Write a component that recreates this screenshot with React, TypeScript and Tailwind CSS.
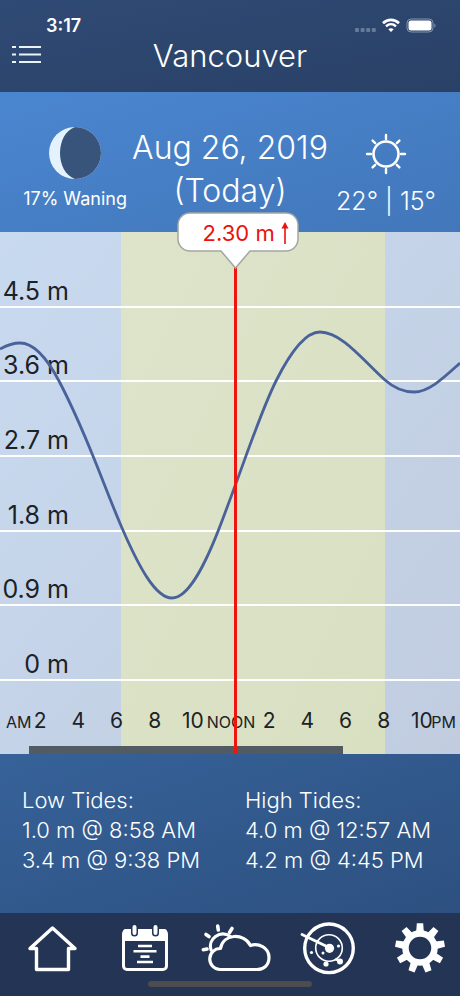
import type { ReactNode } from "react";

const levels = ["4.5 m", "3.6 m", "2.7 m", "1.8 m", "0.9 m", "0 m"];

const hours = ["2", "4", "6", "8", "10", "NOON", "2", "4", "6", "8", "10"];

const tides = [
  { title: "Low Tides:", rows: ["1.0 m @ 8:58 AM", "3.4 m @ 9:38 PM"] },
  { title: "High Tides:", rows: ["4.0 m @ 12:57 AM", "4.2 m @ 4:45 PM"] },
];

// x, y and slope of the water level along the day
const knots = [
  [0, 117, -0.55],
  [20, 111, 0],
  [59, 149, 1.9],
  [93, 224, 2.45],
  [122, 296, 2.3],
  [172, 366, 0],
  [222, 289, -2.65],
  [235, 254, -2.7],
  [276, 149, -2],
  [320, 100, 0],
  [385, 148, 0.9],
  [414, 160, 0],
  [460, 131, -0.9],
];

function curvePath() {
  let d = `M${knots[0][0]} ${knots[0][1]}`;
  for (let i = 1; i < knots.length; i++) {
    const [x0, y0, m0] = knots[i - 1];
    const [x1, y1, m1] = knots[i];
    const h = (x1 - x0) / 3;
    d += ` C${x0 + h} ${y0 + m0 * h} ${x1 - h} ${y1 - m1 * h} ${x1} ${y1}`;
  }
  return d;
}

function StatusBar() {
  return (
    <div className="flex h-4 items-center justify-between pr-6 pl-[46px]">
      <span className="text-lg leading-4 font-semibold">3:17</span>
      <div className="flex items-center gap-1.5">
        <svg width="21" height="16" viewBox="0 0 21 16" fill="#667b9b" aria-hidden="true">
          <rect x="0" y="10" width="4" height="4" rx="1" />
          <rect x="5.6" y="10" width="4" height="4" rx="1" />
          <rect x="11.2" y="10" width="4" height="4" rx="1" />
          <rect x="16.8" y="10" width="4" height="4" rx="1" />
        </svg>
        <svg width="18" height="16" viewBox="0 0 18 16" fill="none" stroke="#fff" aria-hidden="true">
          <path d="M1 5.2C5.6.7 12.4.7 17 5.2" strokeWidth="2.6" />
          <path d="M4 8.4C6.9 5.6 11.1 5.6 14 8.4" strokeWidth="2.4" />
          <path d="M9 14 6.3 11.2C7.9 9.8 10.1 9.8 11.7 11.2Z" fill="#fff" stroke="none" />
        </svg>
        <svg width="30" height="16" viewBox="0 0 30 16" aria-hidden="true">
          <rect x="1" y="1" width="26" height="13" rx="4" fill="none" stroke="#8394ae" />
          <rect x="2.5" y="2.5" width="23" height="10" rx="2.5" fill="#fff" />
          <path d="M28.3 5.3c1.6.8 1.6 3.6 0 4.4z" fill="#8394ae" />
        </svg>
      </div>
    </div>
  );
}

function Header() {
  return (
    <header className="h-[92px] bg-linear-to-br from-[#2f4a74] to-[#2a4167] pt-[18px]">
      <StatusBar />
      <div className="grid grid-cols-[1fr_auto_1fr] items-center px-3 pt-px">
        <button aria-label="Locations" className="-mt-1 justify-self-start">
          <svg width="29" height="20" viewBox="0 0 29 20" stroke="#e8f3fa" strokeWidth="2" aria-hidden="true">
            <path d="M0 3h4M7 3h22M0 10.5h4M7 10.5h22M0 18h4M7 18h22" />
          </svg>
        </button>
        <h1 className="text-[31px] leading-[42px] font-light">Vancouver</h1>
      </div>
    </header>
  );
}

function DayPanel() {
  return (
    <section className="grid h-[140px] grid-cols-[minmax(0,1fr)_auto_minmax(0,1fr)] bg-linear-to-br from-[#4a86d0] to-[#4277ba]">
      <div className="flex flex-col items-center pt-[34px] pl-[18px]">
        <svg width="54" height="54" viewBox="0 0 54 54" aria-hidden="true">
          <circle cx="27" cy="27" r="26" fill="#e3f2fd" />
          <path d="M27 1a26 26 0 0 1 0 52C7 46 7 8 27 1Z" fill="#38547a" />
        </svg>
        <p className="mt-1 text-lg leading-[30px] whitespace-nowrap">17% Waning</p>
      </div>
      <h2 className="pt-[34px] text-center text-[32px] leading-[43px] font-light">
        Aug 26, 2019
        <br />
        (Today)
      </h2>
      <div className="flex flex-col items-center pt-[41px] pr-4">
        <svg width="42" height="42" viewBox="0 0 42 42" fill="none" stroke="#fff" strokeWidth="2.4" strokeLinecap="round" aria-hidden="true">
          <circle cx="21" cy="21" r="12.5" strokeWidth="2.6" />
          <path d="M21 2v4M21 36v4M2 21h4M36 21h4M7.6 7.6l2.600 2.600M31.800 31.800l2.600 2.600M7.6 34.4l2.600-2.600M31.800 10.2l2.600-2.600" />
        </svg>
        <p className="mt-2.5 text-[25px] leading-8 font-light whitespace-nowrap">22° | 15°</p>
      </div>
    </section>
  );
}

function TideChart() {
  return (
    <section
      aria-label="Tide chart"
      className="relative h-[522px] bg-linear-to-br from-[#c8daf0] to-[#c1ccdf] text-[#1c2226]"
    >
      <div className="absolute inset-y-0 right-[16.2%] left-[26.4%] bg-linear-to-br from-[#dee4ca] to-[#d9dfc1]" />
      <div className="relative grid h-[449px] grid-rows-6 pt-px">
        {levels.map((level) => (
          <div key={level} className="flex items-end border-b-2 border-white">
            <span className="w-[69px] text-right text-[25px] leading-[30px] whitespace-nowrap">{level}</span>
          </div>
        ))}
      </div>
      <div className="relative mt-6 grid grid-cols-[minmax(0,1fr)_repeat(11,minmax(0,2fr))_minmax(0,1fr)] items-baseline pl-0.5 leading-8 whitespace-nowrap">
        <span className="pl-1 text-base leading-8">AM</span>
        {hours.map((hour, i) => (
          <span key={i} className="flex justify-center">
            <span className={hour === "NOON" ? "text-base leading-8" : "text-[21px] leading-8"}>{hour}</span>
          </span>
        ))}
        <span className="flex justify-end pr-1 text-base leading-8">PM</span>
      </div>
      <svg
        className="absolute inset-0 h-full w-full"
        viewBox="0 0 460 522"
        preserveAspectRatio="none"
        fill="none"
        aria-hidden="true"
      >
        <path d={curvePath()} stroke="#4a629a" strokeWidth="2.8" vectorEffect="non-scaling-stroke" />
      </svg>
      <div className="absolute right-[25.4%] bottom-0 left-[6.3%] h-2 bg-[#525b61]" />
      <div className="absolute inset-y-0 left-[50.8%] w-[3px] bg-[#f0140f]" />
      <div className="absolute -top-5 left-[50.8%] -ml-[57px] h-14 w-[122px]">
        <svg width="122" height="58" viewBox="0 0 122 58" aria-hidden="true">
          <path
            d="M13 1h96a12 12 0 0 1 12 12v14a12 12 0 0 1-12 12H73L58.5 56 44 39H13A12 12 0 0 1 1 27V13A12 12 0 0 1 13 1Z"
            fill="#fff"
            stroke="#a2a7a0"
            strokeWidth="1.5"
          />
        </svg>
        <div className="absolute inset-x-0 top-[5px] flex h-8 items-center justify-end gap-1.5 pr-2.5 text-[#ea120e]">
          <span className="text-[22px] leading-8 whitespace-nowrap">2.30 m</span>
          <svg width="8" height="24" viewBox="0 0 8 24" aria-hidden="true">
            <path d="M4 23V5" stroke="currentColor" strokeWidth="1.6" />
            <path d="M4 1 7.5 7.5h-7Z" fill="currentColor" />
          </svg>
        </div>
      </div>
    </section>
  );
}

function TideTimes() {
  return (
    <section className="grid flex-1 grid-cols-[223fr_215fr] bg-linear-to-br from-[#366299] to-[#2d5080] pt-[31px] pb-8 pl-[22px] text-[22px] leading-[30px] font-light whitespace-nowrap">
      {tides.map((tide) => (
        <div key={tide.title}>
          <h3>{tide.title}</h3>
          {tide.rows.map((row) => (
            <p key={row}>{row}</p>
          ))}
        </div>
      ))}
    </section>
  );
}

function NavLink({ label, children }: { label: string; children: ReactNode }) {
  return (
    <a href="#" aria-label={label} className="flex w-14 justify-center *:shrink-0">
      {children}
    </a>
  );
}

function BottomNav() {
  return (
    <nav className="relative flex h-[83px] justify-between bg-[#233454] pt-[7px] pr-3 pl-6">
      <NavLink label="Home">
        <svg width="56" height="56" viewBox="0 0 56 56" fill="none" stroke="#fff" strokeWidth="3.4" strokeLinejoin="round">
          <path d="M28.5 8 6 28.500H12.500V49.500H44.500V28.500H51Z" />
        </svg>
      </NavLink>
      <NavLink label="Calendar">
        <svg width="56" height="56" viewBox="0 0 56 56" fill="none">
          <rect x="7.5" y="10.5" width="43" height="39" rx="3.5" stroke="#fff" strokeWidth="3" />
          <path d="M7 12a3 3 0 0 1 3-3h38a3 3 0 0 1 3 3v9H7Z" fill="#fff" />
          <path d="M18.5 8v5M39.5 8v5" stroke="#233454" strokeWidth="7" strokeLinecap="round" />
          <path d="M18.5 7v6M39.5 7v6" stroke="#fff" strokeWidth="4" strokeLinecap="round" />
          <path d="M22 26h14M17.5 31.3h23M24.5 36.6h9M21 42h16" stroke="#fff" strokeWidth="2.6" />
        </svg>
      </NavLink>
      <NavLink label="Weather">
        <svg width="72" height="56" viewBox="0 0 72 56" fill="none" stroke="#fff" strokeWidth="3.2" strokeLinecap="round" strokeLinejoin="round">
          <path d="M20 49.500A10.500 10.500 0 0 1 20.500 28.500C23 13.500 44 12.500 50.500 25.500 58 23 69 27 69 37.500 69 45 64 49.500 57 49.500Z" />
          <path d="M11 30C7.500 19 20 9.500 30.500 16.500" />
          <path d="M17.700 6l.6 4M32 8.500l-2.500 4M6 14.500l3 2M3.300 29.700l3.700-.7" strokeWidth="3.6" />
        </svg>
      </NavLink>
      <NavLink label="Radar">
        <svg width="58" height="56" viewBox="0 0 58 56" fill="none" stroke="#fff">
          <circle cx="30" cy="28.3" r="24.3" strokeWidth="3.4" />
          <circle cx="30" cy="28" r="13.3" strokeWidth="1.6" />
          <path d="M3 14.5 31 28" strokeWidth="2.8" strokeLinecap="round" />
          <g fill="#fff" stroke="none">
            <circle cx="30.5" cy="28.3" r="4.6" />
            <circle cx="12.5" cy="32.5" r="1.6" />
            <circle cx="24" cy="33" r="1.5" />
            <circle cx="39.5" cy="26" r="1.6" />
            <circle cx="27" cy="44" r="2.6" />
            <circle cx="41" cy="41.5" r="3" />
            <circle cx="37.5" cy="39.5" r="1.5" />
          </g>
        </svg>
      </NavLink>
      <NavLink label="Settings">
        <svg width="52" height="56" viewBox="-26 -28 52 56" fill="#fff">
          <circle r="14.5" fill="none" stroke="#fff" strokeWidth="6.5" />
          {[0, 40, 80, 120, 160, 200, 240, 280, 320].map((angle) => (
            <path key={angle} d="M-3.8-16 -3.2-24.8H3.2L3.8-16Z" transform={`rotate(${angle})`} />
          ))}
        </svg>
      </NavLink>
      <div className="absolute bottom-[9px] left-[32.2%] h-1.5 w-[35.6%] rounded-full bg-[#4c4b4d]" />
    </nav>
  );
}

export default function App() {
  return (
    <main className="flex min-h-screen flex-col overflow-hidden bg-[#233454] font-['Inter',sans-serif] text-white">
      <Header />
      <DayPanel />
      <TideChart />
      <TideTimes />
      <BottomNav />
    </main>
  );
}
